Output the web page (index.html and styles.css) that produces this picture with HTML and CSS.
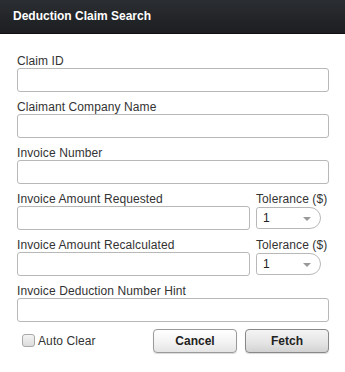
FILE: index.html
```html
<!DOCTYPE html>
<html lang="en">
<head>
    <meta charset="UTF-8">
    <meta name="viewport" content="width=device-width, initial-scale=1.0">
    <title>Deduction Claim Search</title>
    <link rel="stylesheet" href="styles.css">
</head>
<body>
    <div class="dialog">
        <div class="dialog-header">Deduction Claim Search</div>
        <form class="dialog-body" id="searchForm">
            <div class="form-group">
                <label for="claimId">Claim ID</label>
                <input type="text" id="claimId">
            </div>
            <div class="form-group">
                <label for="company">Claimant Company Name</label>
                <input type="text" id="company">
            </div>
            <div class="form-group">
                <label for="invoice">Invoice Number</label>
                <input type="text" id="invoice">
            </div>
            <div class="form-group split">
                <div>
                    <label for="requested">Invoice Amount Requested</label>
                    <input type="text" id="requested">
                </div>
                <div>
                    <label for="tolRequested">Tolerance ($)</label>
                    <div class="select-wrap">
                        <select id="tolRequested">
                            <option>1</option>
                            <option>5</option>
                            <option>10</option>
                        </select>
                    </div>
                </div>
            </div>
            <div class="form-group split">
                <div>
                    <label for="recalculated">Invoice Amount Recalculated</label>
                    <input type="text" id="recalculated">
                </div>
                <div>
                    <label for="tolRecalculated">Tolerance ($)</label>
                    <div class="select-wrap">
                        <select id="tolRecalculated">
                            <option>1</option>
                            <option>5</option>
                            <option>10</option>
                        </select>
                    </div>
                </div>
            </div>
            <div class="form-group">
                <label for="hint">Invoice Deduction Number Hint</label>
                <input type="text" id="hint">
            </div>
            <div class="actions">
                <label class="check"><input type="checkbox" id="autoClear"> Auto Clear</label>
                <button type="button" class="btn">Cancel</button>
                <button type="submit" class="btn btn-primary">Fetch</button>
            </div>
        </form>
    </div>
</body>
</html>
```

FILE: styles.css
```css
* {
    margin: 0;
    padding: 0;
    box-sizing: border-box;
}

body {
    font-family: 'Liberation Sans', Arial, sans-serif;
    font-size: 12px;
    color: #333;
    background: white;
}

.dialog {
    width: 345px;
    min-height: 372px;
    background: white;
}

.dialog-header {
    height: 34px;
    padding: 0 13px;
    line-height: 33px;
    font-size: 12px;
    font-weight: bold;
    color: white;
    background: linear-gradient(#2b2e32 0%, #1c1e21 100%);
    border-bottom: 1px solid #111;
}

.dialog-body {
    padding: 20px 16px 0 17px;
}

.form-group {
    margin-bottom: 8px;
}

label {
    display: block;
    height: 14px;
    line-height: 14px;
    color: #333;
    letter-spacing: 0.1px;
}

input[type="text"] {
    display: block;
    width: 100%;
    height: 24px;
    padding: 0 4px;
    border: 1px solid #b8b8b8;
    border-radius: 3px;
    font-family: inherit;
    font-size: 12px;
    background: white;
}

input[type="text"]:focus {
    outline: none;
    border-color: #7a9cc6;
}

.split {
    display: grid;
    grid-template-columns: 1fr 73px;
    column-gap: 6px;
}

.select-wrap {
    position: relative;
    width: 65px;
}

.select-wrap::after {
    content: '';
    position: absolute;
    right: 10px;
    top: 10px;
    border-left: 4px solid transparent;
    border-right: 4px solid transparent;
    border-top: 4px solid #999;
    pointer-events: none;
}

select {
    appearance: none;
    -webkit-appearance: none;
    display: block;
    width: 100%;
    height: 22px;
    margin-top: 1px;
    padding: 0 6px;
    border: 1px solid #b8b8b8;
    border-radius: 3px 12px 12px 3px;
    font-family: inherit;
    font-size: 12px;
    color: #222;
    background: white;
}

.actions {
    display: flex;
    align-items: center;
    gap: 8px;
    margin-top: -1px;
}

.check {
    display: flex;
    align-items: center;
    gap: 3px;
    height: 24px;
    margin-left: 5px;
    margin-right: auto;
    line-height: 14px;
}

.check input {
    appearance: none;
    -webkit-appearance: none;
    width: 13px;
    height: 13px;
    margin-top: -2px;
    border: 1px solid #a8a8a8;
    border-radius: 3px;
    background: linear-gradient(#f4f4f4, #dcdcdc);
}

.check input:checked {
    background: #7a9cc6;
}

.btn {
    width: 84px;
    height: 24px;
    border: 1px solid #9a9a9a;
    border-radius: 4px;
    font-family: inherit;
    font-size: 12px;
    font-weight: bold;
    color: #222;
    background: linear-gradient(#ffffff 0%, #f2f2f2 60%, #e4e4e4 100%);
    box-shadow: 0 1px 1px rgba(0,0,0,0.15);
    cursor: pointer;
}

.btn-primary {
    border-color: #888;
    background: linear-gradient(#f4f4f4 0%, #e4e4e4 60%, #d2d2d2 100%);
}

.btn:hover {
    background: #e8e8e8;
}
```
